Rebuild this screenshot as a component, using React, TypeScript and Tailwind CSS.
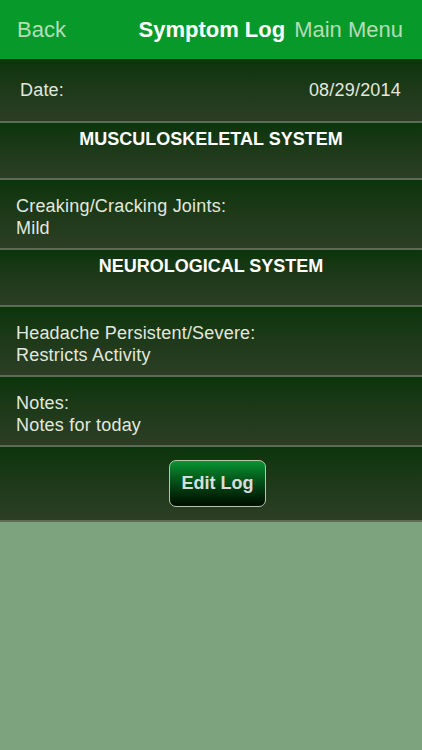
const Row = ({ children, className = "" }: { children: React.ReactNode; className?: string }) => (
    <div className={`border-b-2 border-[#5b6b55] bg-gradient-to-b from-[#0b350b] to-[#2c3e25] ${className}`}>
        {children}
    </div>
)

const entries = [
    { header: "MUSCULOSKELETAL SYSTEM", label: "Creaking/Cracking Joints:", value: "Mild" },
    { header: "NEUROLOGICAL SYSTEM", label: "Headache Persistent/Severe:", value: "Restricts Activity" },
]

export default function App() {
    return (
        <div className="min-h-screen w-[422px] bg-[#7ca37e] font-['Liberation_Sans',Arial,sans-serif]">
            {/* nav bar */}
            <div className="flex h-[59px] items-center bg-[#079a2a] pl-[17px] pr-[19px] text-[22px]">
                <span className="text-[#b6dcb8]">Back</span>
                <span className="ml-auto font-bold text-white">Symptom Log</span>
                <span className="ml-[9px] text-[#b6dcb8]">Main Menu</span>
            </div>

            <Row className="flex h-[64px] items-center justify-between pl-[20px] pr-[21px] text-[18px] tracking-[0.2px] text-[#e2e8df]">
                <span>Date:</span>
                <span>08/29/2014</span>
            </Row>

            {entries.map((e) => (
                <div key={e.header}>
                    <Row className="h-[57px] pt-[3px] text-center text-[18px] font-bold text-white">
                        {e.header}
                    </Row>
                    <Row className="flex h-[70px] flex-col justify-center px-[16px] pt-[6px] text-[18px] leading-[22px] tracking-[0.2px] text-[#e2e8df]">
                        <span>{e.label}</span>
                        <span>{e.value}</span>
                    </Row>
                </div>
            ))}

            <Row className="flex h-[70px] flex-col justify-center px-[16px] pt-[6px] text-[18px] leading-[22px] tracking-[0.2px] text-[#e2e8df]">
                <span>Notes:</span>
                <span>Notes for today</span>
            </Row>

            <Row className="flex h-[75px] items-start justify-center pl-[13px] pt-[13px]">
                <button className="h-[47px] w-[97px] rounded-[7px] border border-[#b4c6ae] bg-gradient-to-b from-[#0a9532] to-[#000d02] text-[18px] font-bold text-[#dcdcdc]">
                    Edit Log
                </button>
            </Row>
        </div>
    )
}
